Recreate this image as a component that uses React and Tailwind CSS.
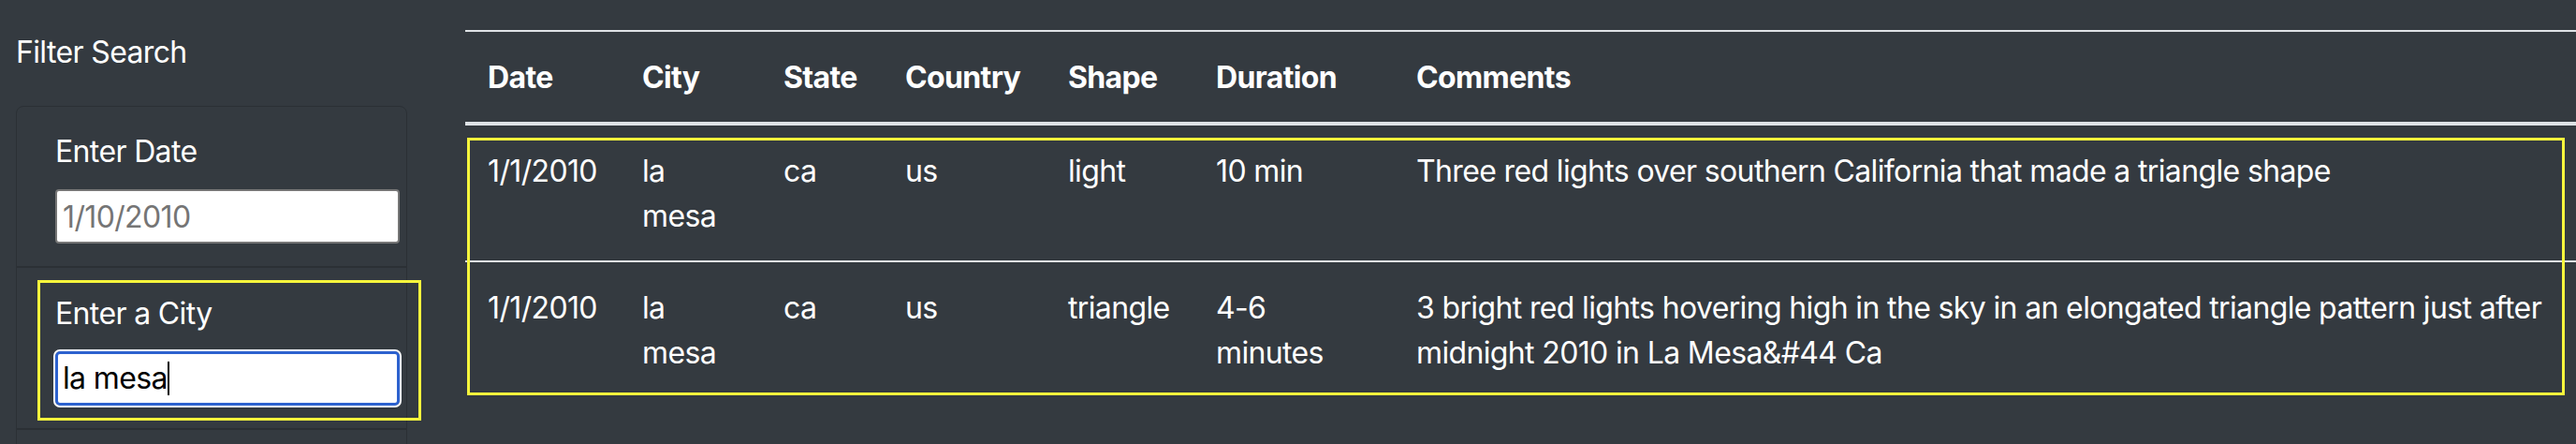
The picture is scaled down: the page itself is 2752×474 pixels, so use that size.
import React from "react";

const rows = [
  {
    date: "1/1/2010",
    city: "la mesa",
    state: "ca",
    country: "us",
    shape: "light",
    duration: "10 min",
    comments: "Three red lights over southern California that made a triangle shape",
  },
  {
    date: "1/1/2010",
    city: "la mesa",
    state: "ca",
    country: "us",
    shape: "triangle",
    duration: "4-6 minutes",
    comments:
      "3 bright red lights hovering high in the sky in an elongated triangle pattern just after midnight 2010 in La Mesa&#44 Ca",
  },
];

const cols = [
  { label: "Date", w: "w-[165px]" },
  { label: "City", w: "w-[151px]" },
  { label: "State", w: "w-[130px]" },
  { label: "Country", w: "w-[174px]" },
  { label: "Shape", w: "w-[158px]" },
  { label: "Duration", w: "w-[214px]" },
  { label: "Comments", w: "w-auto" },
];

export default function App() {
  return (
    <div className="flex h-[474px] w-full overflow-hidden bg-[#343a40] font-[Inter,sans-serif] text-[32px] leading-[48px] tracking-[-0.02em] text-white">
      {/* Sidebar */}
      <aside className="w-[497px] shrink-0 pl-[17px] pt-[32px]">
        <h5 className="text-[32px] font-normal leading-[48px]">Filter Search</h5>
        <div className="mt-[33px] h-[400px] w-[418px] rounded-t-[8px] border border-[#2b3035]">
          <div className="border-b-2 border-[#2b3035] px-[41px] pb-[24px] pt-[24px]">
            <label className="mb-[16px] block">Enter Date</label>
            <input
              type="text"
              placeholder="1/10/2010"
              className="block h-[58px] w-[368px] rounded-[4px] border-2 border-[#767676] bg-white px-[6px] text-[32px] tracking-[-0.02em] text-black outline-none placeholder:text-[#757575]"
            />
          </div>
          <div className="relative border-b-2 border-[#2b3035] px-[41px] pb-[24px] pt-[25px]">
            <div className="pointer-events-none absolute left-[22px] top-[13px] h-[150px] w-[410px] border-[3px] border-[#f6f53c]" />
            <label className="mb-[16px] block">Enter a City</label>
            <div className="flex h-[58px] w-[368px] items-center rounded-[5px] border-[3px] border-[#2d62cf] bg-white px-[5px] text-black outline-2 outline-white">
              <span>la mesa</span>
              <span className="inline-block h-[36px] w-[2px] bg-black" />
            </div>
          </div>
          <div className="h-[40px]" />
        </div>
      </aside>

      {/* Table */}
      <main className="relative flex-1 pt-[32px]">
        <table className="w-full table-fixed border-collapse text-left">
          <thead>
            <tr>
              {cols.map((c) => (
                <th
                  key={c.label}
                  className={`${c.w} border-b-4 border-t-2 border-[#dee2e6] px-[24px] pb-[23px] pt-[25px] align-bottom font-bold`}
                >
                  {c.label}
                </th>
              ))}
            </tr>
          </thead>
          <tbody>
            {rows.map((r, i) => (
              <tr key={i}>
                {[r.date, r.city, r.state, r.country, r.shape, r.duration, r.comments].map((v, j) => (
                  <td key={j} className="border-t-2 border-[#dee2e6] px-[24px] pb-[23px] pt-[25px] align-top">
                    {v}
                  </td>
                ))}
              </tr>
            ))}
          </tbody>
        </table>
        <div className="pointer-events-none absolute left-[2px] top-[147px] h-[275px] w-[2241px] border-[3px] border-[#f6f53c]" />
      </main>
    </div>
  );
}
